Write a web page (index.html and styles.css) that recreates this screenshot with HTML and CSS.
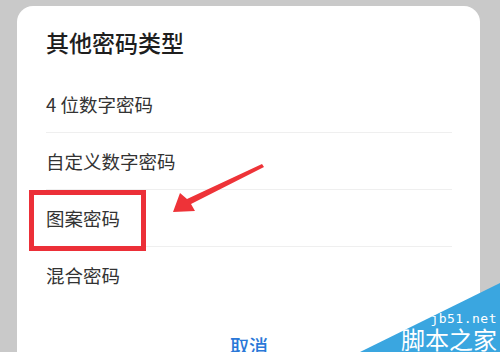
FILE: index.html
```html
<!DOCTYPE html>
<html lang="zh-CN">
<head>
<meta charset="utf-8">
<link rel="stylesheet" href="styles.css">
</head>
<body>
<div class="screen">
  <div class="card">
    <div class="title">其他密码类型</div>
    <ul class="list">
      <li class="row">4 位数字密码</li>
      <li class="row">自定义数字密码</li>
      <li class="row">图案密码</li>
      <li class="row last">混合密码</li>
    </ul>
    <div class="cancel">取消</div>
  </div>
  <div class="highlight"></div>
  <svg class="arrow" width="500" height="352" viewBox="0 0 500 352">
    <polygon points="173,212 180,193 187,199 262,164 264,167 191,204 195,211" fill="#ee3338"/>
  </svg>
  <div class="mark">
    <svg class="mark-bg" width="140" height="70" viewBox="0 0 140 70">
      <polygon points="0,70 140,1 140,70" fill="#3aa6e0"/>
    </svg>
    <div class="mark-text">
      <div class="mark-url">jb51.net</div>
      <div class="mark-name">脚本之家</div>
    </div>
  </div>
</div>
</body>
</html>
```
FILE: styles.css
```css
html, body {
  margin: 0;
  padding: 0;
}
body {
  width: 500px;
  height: 352px;
  overflow: hidden;
  background: #c9c9c9;
  font-family: "Noto Sans CJK SC", "Noto Sans", sans-serif;
}
.screen {
  position: relative;
  width: 500px;
  height: 352px;
  overflow: hidden;
}
.card {
  margin: 6px 0 0 17px;
  width: 463px;
  height: 420px;
  box-sizing: border-box;
  background: #fff;
  border-radius: 16px;
  padding: 0 28px 0 29px;
}
.title {
  padding-top: 21px;
  height: 30px;
  line-height: 30px;
  font-size: 23px;
  font-weight: 500;
  color: #1e1e1e;
  margin-bottom: 19px;
}
.list {
  list-style: none;
  margin: 0;
  padding: 0;
}
.row {
  height: 57px;
  box-sizing: border-box;
  border-bottom: 1px solid #efefef;
  display: flex;
  align-items: center;
  font-size: 18.5px;
  color: #333;
  padding-bottom: 1px;
}
.row.last {
  border-bottom: none;
}
.cancel {
  margin-top: 30px;
  text-align: center;
  font-size: 19px;
  line-height: 24px;
  color: #2a78d8;
  font-weight: 500;
}
.highlight {
  position: absolute;
  left: 29px;
  top: 190px;
  width: 117px;
  height: 61px;
  box-sizing: border-box;
  border: 5px solid #ec2f38;
}
.arrow {
  position: absolute;
  left: 0;
  top: 0;
}
.mark {
  position: absolute;
  right: 0;
  bottom: 0;
  width: 140px;
  height: 70px;
}
.mark-bg {
  position: absolute;
  left: 0;
  top: 0;
}
.mark-text {
  position: absolute;
  right: 3px;
  bottom: 0;
  color: #fff;
  text-align: right;
}
.mark-url {
  font-family: "DejaVu Sans Mono", monospace;
  font-size: 13px;
  line-height: 13px;
  letter-spacing: 0.5px;
}
.mark-name {
  font-size: 24px;
  line-height: 27px;
}
```
